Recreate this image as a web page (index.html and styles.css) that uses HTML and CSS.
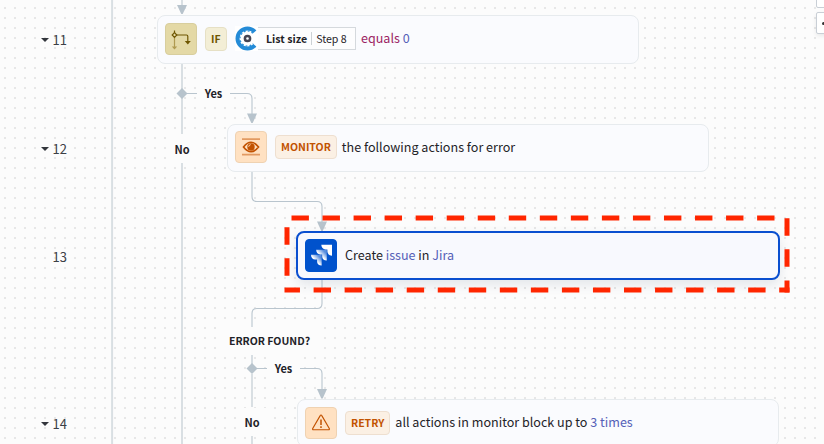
FILE: index.html
```html
<!DOCTYPE html>
<html lang="en">
<head>
<meta charset="utf-8">
<title>Recipe editor</title>
<link rel="stylesheet" href="styles.css">
</head>
<body>
<main class="canvas">
  <svg class="wires" width="824" height="444" viewBox="0 0 824 444" fill="none">
    <g class="trunk">
      <path d="M112.1 0V444"/>
      <path d="M182 0V6M182 63V134M182 163V444"/>
      <path d="M252 374V407M252 436V444"/>
    </g>
    <g class="wire">
      <path d="M187 93.5H197M230 93.5H247Q252 93.5 252 98.500V115"/>
      <path d="M252 171V196.500Q252 201.500 257 201.500H317Q322 201.500 322 206.500V223"/>
      <path d="M322 280V303.500Q322 308.500 317 308.500H257Q252 308.500 252 313.500V327M252 355V364"/>
      <path d="M257 368.500H267M300 368.500H317Q322 368.500 322 373.500V390"/>
    </g>
    <g class="marker">
      <path d="M177 5H187L182.700 14H181.300Z"/>
      <path d="M247 113.500H257L252.700 123H251.300Z"/>
      <path d="M317 221.500H327L322.700 231H321.300Z"/>
      <path d="M317 389H327L322.700 398.500H321.300Z"/>
      <path d="M182 88L187.500 93.500L182 99L176.500 93.500Z"/>
      <path d="M252 363L257.500 368.500L252 374L246.500 368.500Z"/>
    </g>
  </svg>

  <div class="line-no n11"><i class="caret"></i>11</div>
  <div class="line-no n12"><i class="caret"></i>12</div>
  <div class="line-no n13">13</div>
  <div class="line-no n14"><i class="caret"></i>14</div>

  <b class="label yes1">Yes</b>
  <b class="label no1">No</b>
  <b class="label found">ERROR FOUND?</b>
  <b class="label yes2">Yes</b>
  <b class="label no2">No</b>

  <section class="step s11">
    <div class="tile olive">
      <svg width="32" height="32" viewBox="0 0 32 32" fill="none" stroke="#6f5600" stroke-width="1.200">
        <g stroke="#b09a50" fill="#b09a50"><path d="M9.500 14V24"/><path d="M6.800 23.500H12.200L9.500 26.500Z" stroke="none"/></g>
        <path d="M11.500 12H21.500Q22.800 12 22.800 13.300V19M9.500 7.500V10"/>
        <path d="M9.500 9.700L11.800 12L9.500 14.300L7.200 12Z"/>
        <path d="M19.800 18H25.800L22.800 21.500Z" fill="#6f5600" stroke="none"/>
      </svg>
    </div>
    <span class="tag olive-tag">IF</span>
    <div class="pill">
      <svg width="23" height="25" viewBox="0 0 23 25" fill="none">
        <path d="M0 0H23V25H0Z" fill="#fff"/>
        <circle cx="12.500" cy="12.500" r="10" stroke="#248bd7" stroke-width="4"/>
        <circle cx="12.500" cy="12.500" r="7.500" stroke="#248bd7" stroke-width="1.200" stroke-dasharray="1.800 2.127"/>
        <path d="M13.500 12.500L19 6.500L23 3V22L19 18.500Z" fill="#fff"/>
        <path d="M21.800 0H23V25H21.800Z" fill="#fff"/>
        <circle cx="12.500" cy="12.500" r="2.600" fill="#fff" stroke="#454553" stroke-width="2.500"/>
      </svg>
      <div class="pill-body"><b>List size</b><span>Step 8</span></div>
    </div>
    <span class="phrase"><em class="plum">equals</em> <em>0</em></span>
  </section>

  <section class="step s12">
    <div class="tile orange">
      <svg width="32" height="32" viewBox="0 0 32 32" fill="none">
        <path d="M7 8.200H25M7 23.600H25" stroke="#e29a62" stroke-width="1.700"/>
        <path d="M8.500 16Q16 6.500 23.500 16Q16 25.500 8.500 16Z" stroke="#c25200" stroke-width="1.700"/>
        <circle cx="16" cy="16" r="3.700" fill="#c25200"/>
        <path d="M13.700 15.700A2.200 2.200 0 0 1 15.600 13.700" stroke="#ffe1c2"/>
      </svg>
    </div>
    <span class="tag orange-tag">MONITOR</span>
    <span class="phrase">the following actions for error</span>
  </section>

  <section class="step active s13">
    <div class="tile blue">
      <svg width="32" height="33" viewBox="0 0 32 33">
        <defs>
          <linearGradient id="fade" x1="1" y1="0" x2="0" y2="1"><stop offset=".2" stop-color="#fff" stop-opacity=".35"/><stop offset=".55" stop-color="#fff"/></linearGradient>
        </defs>
        <path d="M16.300 5.800H27V16.700C24.200 16.700 22.400 14.600 22.400 12.400V10.400H20.500C18.100 10.400 16.300 8.500 16.300 5.800Z" fill="#fff"/>
        <path d="M11.200 10.800H21.800V21.600C19 21.600 17.200 19.700 17.200 17.400V15.500H15.300C13 15.500 11.200 13.600 11.200 10.800Z" fill="url(#fade)"/>
        <path d="M6 15.700H16.700V26.600C13.900 26.600 12.100 24.700 12.100 22.400V20.500H10.200C7.800 20.500 6 18.500 6 15.700Z" fill="url(#fade)"/>
      </svg>
    </div>
    <span class="phrase">Create <em>issue</em> in <em>Jira</em></span>
  </section>

  <section class="step s14">
    <div class="tile orange">
      <svg width="32" height="32" viewBox="0 0 32 32" fill="none" stroke="#c25200" stroke-width="1.150" stroke-linejoin="round">
        <path d="M16 8Q16.500 8 16.800 8.600L24.300 21.500Q24.700 22.700 23.600 22.700H8.400Q7.300 22.700 7.700 21.500L15.200 8.600Q15.500 8 16 8Z"/>
        <path d="M16 12.500V18M16 19.300V21" stroke-width="1.500"/>
      </svg>
    </div>
    <span class="tag orange-tag">RETRY</span>
    <span class="phrase">all actions in monitor block up to <em>3 times</em></span>
  </section>

  <svg class="highlight" width="824" height="444" viewBox="0 0 824 444" fill="none">
    <path d="M291.500 218H775" stroke-dasharray="17.400 13.640"/>
    <path d="M787 218.300V292.500" stroke-dasharray="17.400 13.640"/>
    <path d="M789.500 290H284.500" stroke-dasharray="10.300 13.640 17.400 13.640 17.400 13.640 17.400 13.640 17.400 13.640 17.400 13.640 17.400 13.640 17.400 13.640 17.400 13.640 17.400 13.640 17.400 13.640 17.400 13.640 17.400 13.640 17.400 13.640 17.400 13.640 17.400 13.640 17.400 13.640"/>
    <path d="M287 227.300V276" stroke-dasharray="17.400 13.640"/>
  </svg>

  <div class="tool t1"></div>
  <div class="tool t2"><i></i></div>
</main>
</body>
</html>
```

FILE: styles.css
```css
* { box-sizing: border-box; }
body { margin: 0; }
.canvas {
  position: relative;
  width: 824px;
  height: 444px;
  overflow: hidden;
  background: #fcfcfc conic-gradient(from 270deg at 2px 2px, #e7e7e7 90deg, transparent 0) 4px 7px / 10px 10px;
  color: #1f2328;
  font: 12.57px/20px "Noto Sans CJK SC", "Noto Sans", sans-serif;
  white-space: nowrap;
}
.wires, .highlight { position: absolute; left: 0; top: 0; }
.trunk { stroke: #d9dfe3; stroke-width: 2; }
.wire { stroke: #b9c5ce; stroke-width: 1.1; }
.marker { fill: #b7c3cc; }
.highlight path { stroke: #ff2600; stroke-width: 5; }

.line-no {
  position: absolute;
  left: 41px;
  display: flex;
  align-items: center;
  justify-content: flex-end;
  width: 26px;
  height: 20px;
  color: #3c4046;
  font-size: 13px;
}
.n11 { top: 30px; }
.n12 { top: 139px; }
.n13 { top: 247px; }
.n14 { top: 414px; }
.caret {
  margin: 0 auto 1px 0;
  border: solid transparent;
  border-width: 4px 4px 0;
  border-top-color: #33363c;
}

.label {
  position: absolute;
  display: flex;
  align-items: center;
  justify-content: center;
  height: 28px;
  background: #fcfcfc;
  font-size: 11px;
}
.yes1 { left: 197px; top: 79px; width: 33px; }
.no1 { left: 166px; top: 135px; width: 32px; }
.found { left: 221px; top: 327px; width: 97px; font-size: 10.5px; }
.yes2 { left: 267px; top: 354px; width: 33px; }
.no2 { left: 236px; top: 408px; width: 32px; }

.step {
  position: absolute;
  display: flex;
  align-items: center;
  width: 482px;
  height: 49px;
  padding: 0 7px;
  border: 1px solid #e7ebee;
  border-radius: 8px;
  background: #fafbfe;
}
.s11 { left: 157px; top: 14.5px; padding-bottom: 1px; }
.s12 { left: 227px; top: 123.5px; height: 48px; padding-bottom: 1px; }
.s13 { left: 296px; top: 231px; }
.s14 { left: 297px; top: 399px; height: 48px; padding-bottom: 1px; }
.active {
  width: 484px;
  border: 2px solid #0a4fd0;
  background: #f8f9fe;
  box-shadow: 0 5px 12px rgba(50, 70, 110, .12);
}
.tile {
  flex: none;
  width: 32px;
  height: 32px;
  border: 1px solid;
  border-radius: 4px;
}
.tile svg { display: block; margin: -1px; }
.olive { background: #e4d9a6; border-color: #d8ce9e; }
.orange { background: #ffe1c2; border-color: #efd2b2; }
.blue { height: 33px; background: #0052cc; border-color: #0052cc; }
.tag {
  display: flex;
  align-items: center;
  height: 24px;
  margin-left: 8px;
  padding: 0 5px;
  border: 1px solid;
  border-radius: 4px;
  font-size: 10.5px;
  font-weight: 700;
}
.olive-tag { width: 22px; background: #f3eed6; border-color: #e6e0c5; color: #6f5600; }
.orange-tag { background: #fbf0e4; border-color: #eedfd0; color: #c25200; }
.pill { display: flex; margin-left: 8px; align-items: center; }
.pill-body {
  display: flex;
  align-items: center;
  height: 23px;
  width: 98px;
  padding-left: 8px;
  border: 1px solid #d5d9dd;
  border-left: 0;
  background: #fdfdfe;
  font-size: 10.6px;
}
.pill-body span { margin-left: 4px; padding-left: 4px; border-left: 1px solid #cdd2d6; line-height: 13px; }
.phrase { margin: 0 0 1px 5px; }
.active .phrase { margin: 0 0 2px 8px; }
em { font-style: normal; color: #5560b8; }
.plum { color: #9c2463; }

.tool {
  position: absolute;
  left: 816px;
  width: 30px;
  height: 22px;
  border: 1px solid #c9cfd6;
  border-radius: 2px;
  background: #fff;
}
.t1 { top: -14px; }
.t2 { top: 12px; box-shadow: 0 2px 4px rgba(0, 0, 0, .08); }
.t2 i { display: block; width: 5px; height: 3px; margin: 9px 0 0 5px; border-radius: 2px; background: #333; }
```
